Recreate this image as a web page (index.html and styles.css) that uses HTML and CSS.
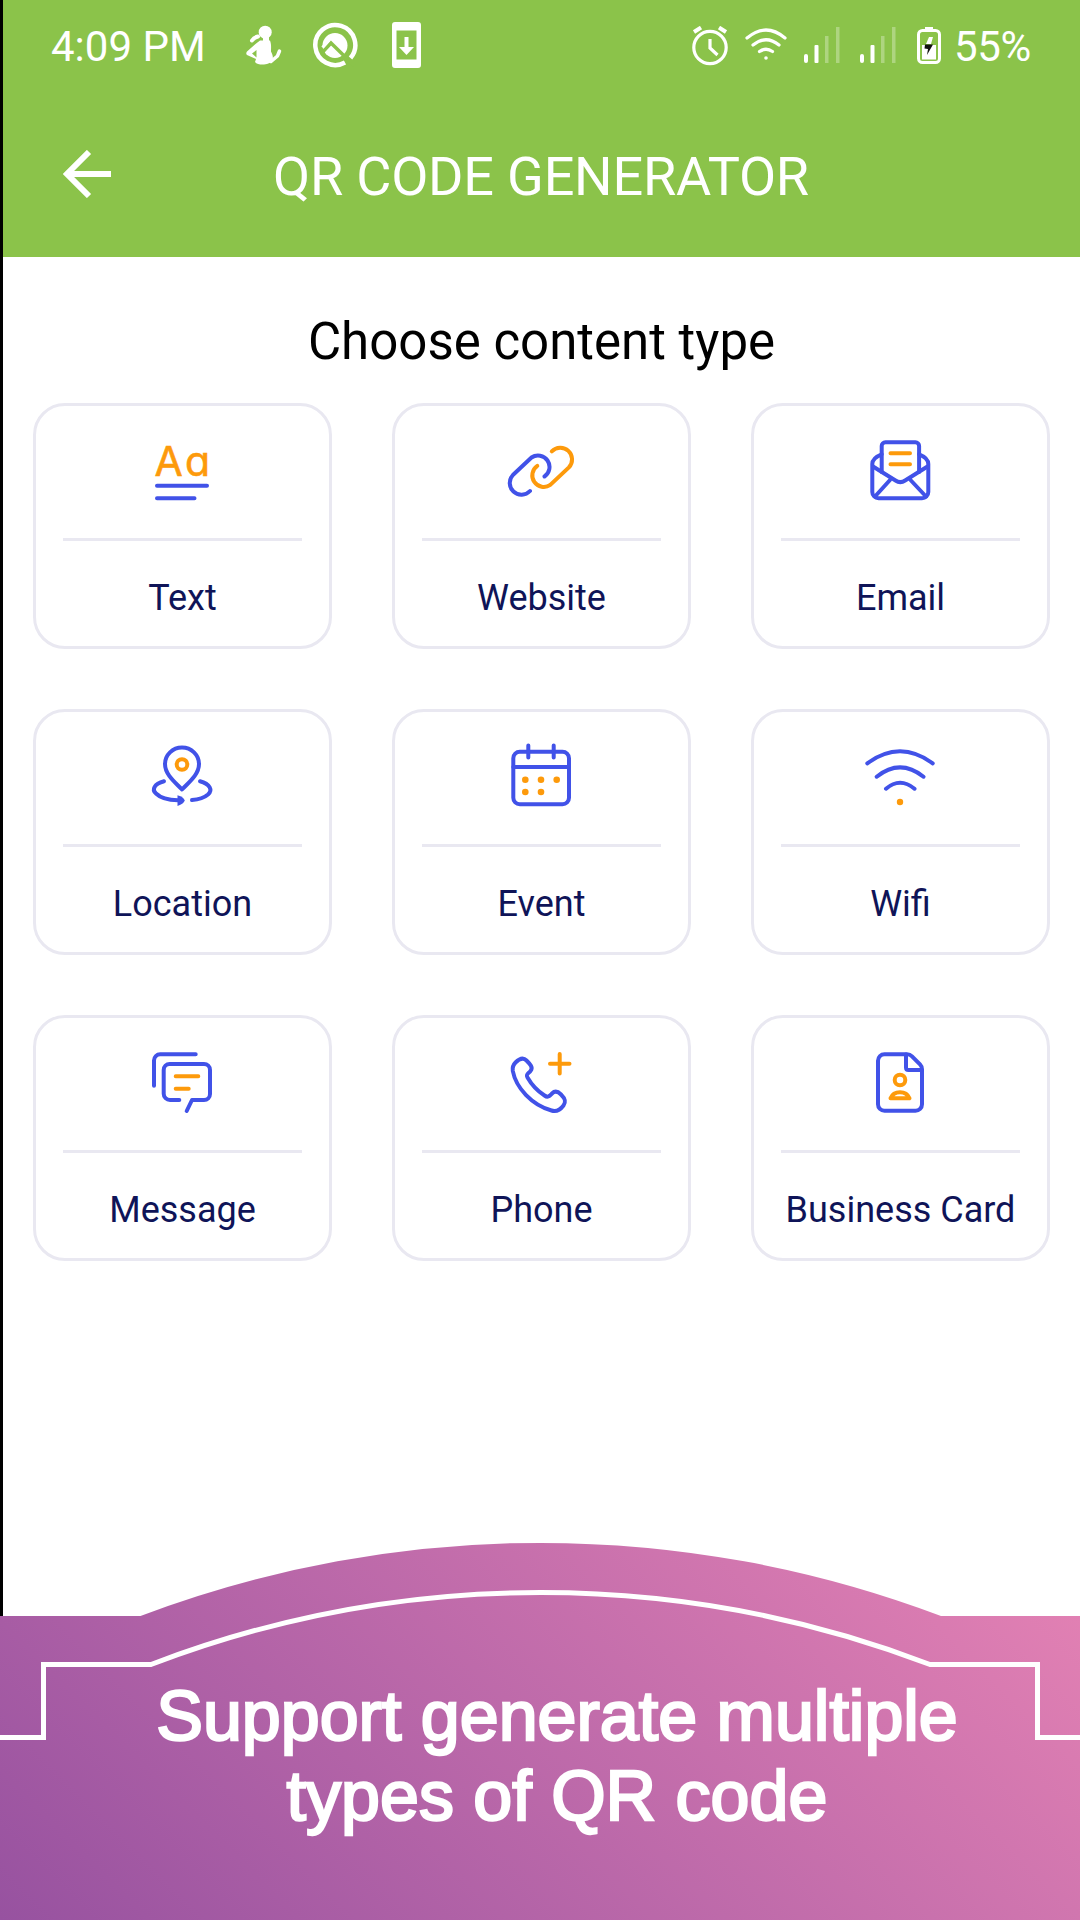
FILE: index.html
```html
<!DOCTYPE html>
<html lang="en">
<head>
  <meta charset="UTF-8">
  <meta name="viewport" content="width=device-width, initial-scale=1.0">
  <title>QR Code Generator</title>
  <link rel="stylesheet" href="styles.css">
</head>
<body>
  <div class="phone">
    <header class="header">
      <!-- Status bar -->
      <div class="status-bar">
        <span class="time">4:09 PM</span>
        <svg class="status-figure" width="36" height="40" viewBox="0 0 36 40">
          <circle cx="19.200" cy="7.200" r="6.500" fill="#fff"/>
          <path d="M6 15.500q2-3 6-4" fill="none" stroke="#fff" stroke-width="4" stroke-linecap="round"/>
          <path d="M25 36.500l6.500-5.500 2-5" fill="none" stroke="#fff" stroke-width="3.500" stroke-linecap="round"/>
          <path d="M17 10h6v8h-6z" fill="#fff"/>
          <path fill-rule="evenodd" fill="#fff" d="M14 15.500h10c1.500 4 1 7 1 11 2 4 2.500 6.500 1 9.500-2 4-14 5-17 1l1-3L1 30c-1-1-1-2 0-3.500L9.500 19zM10.500 25l-4.500 3.500 4.500 4z"/>
        </svg>
        <svg class="status-ring" width="46" height="46" viewBox="0 0 46 46">
          <circle cx="23" cy="23.500" r="12.500" fill="#fff"/>
          <path d="M6 35L19 21 42 43.500" fill="none" stroke="#8bc34a" stroke-width="3.500"/>
          <path d="M8 19v20h6l-1-8z" fill="#8bc34a" opacity=".6"/>
          <path d="M10.500 25.500l6.500-7.500" fill="none" stroke="#fff" stroke-width="3"/>
          <path d="M33 40.500A20 20 0 1 1 38.500 36" fill="none" stroke="#fff" stroke-width="4.500"/>
        </svg>
        <svg class="status-download" width="29" height="46" viewBox="0 0 29 46">
          <path fill-rule="evenodd" fill="#fff" d="M3 0h23a3 3 0 0 1 3 3v40a3 3 0 0 1-3 3H3a3 3 0 0 1-3-3V3a3 3 0 0 1 3-3zM4.500 8.500v29h20v-29z"/>
          <path fill="#fff" d="M12.500 15h4v10h5.500l-7.500 8-7.500-8h5.500z"/>
        </svg>
        <span class="spacer"></span>
        <svg class="status-alarm" width="36" height="40" viewBox="0 0 36 40" fill="none" stroke="#fff">
          <circle cx="18" cy="21.500" r="16.200" stroke-width="3.200"/>
          <path d="M18 13v9l7.500 7" stroke-width="3.200"/>
          <path d="M2 6l7-4.500M34 6l-7-4.500" stroke-width="4"/>
        </svg>
        <svg class="status-wifi" width="42" height="33" viewBox="0 0 42 33" fill="none" stroke="#fff" stroke-width="3.200" stroke-linecap="round">
          <path d="M2 10Q21-6 40 10M8 17q13-10.500 26 0M14.500 23.500q6.500-4.500 13 0"/>
          <circle cx="21" cy="30" r="1.800" fill="#fff" stroke="none"/>
        </svg>
        <svg class="status-signal" width="36" height="36" viewBox="0 0 36 36" fill="#fff">
          <rect x="0" y="27" width="4" height="9" rx="2"/>
          <rect x="10.500" y="18" width="4" height="18" rx="1"/>
          <rect x="21" y="9" width="3.500" height="27" opacity=".3"/>
          <rect x="32" y="0" width="3.500" height="36" opacity=".3"/>
        </svg>
        <svg class="status-signal" width="36" height="36" viewBox="0 0 36 36" fill="#fff">
          <rect x="0" y="27" width="4" height="9" rx="2"/>
          <rect x="10.500" y="18" width="4" height="18" rx="1"/>
          <rect x="21" y="9" width="3.500" height="27" opacity=".3"/>
          <rect x="32" y="0" width="3.500" height="36" opacity=".3"/>
        </svg>
        <svg class="status-battery" width="24" height="37" viewBox="0 0 24 37">
          <rect x="8" y="0" width="8" height="3" fill="#fff"/>
          <rect x="1.500" y="3.500" width="21" height="32" rx="4" fill="none" stroke="#fff" stroke-width="3"/>
          <path d="M5 18h14v14.500H5z" fill="#fff"/>
          <path d="M12 10h4l-2 7h-5z" fill="#fff"/>
          <path d="M8 17.500h8L10 28l1-6-3.500-.5z" fill="#111"/>
        </svg>
        <span class="battery-level">55%</span>
      </div>
      <!-- Title bar -->
      <div class="title-bar">
        <svg class="back" width="48" height="48" viewBox="0 0 48 48" fill="none" stroke="#fff" stroke-width="6">
          <path d="M26 2L4 24l22 22M4.500 24H48"/>
        </svg>
        <h1 class="title">QR CODE GENERATOR</h1>
      </div>
    </header>

    <main class="content">
      <h2 class="heading">Choose content type</h2>
      <div class="grid">
        <div class="card">
          <svg class="icon" viewBox="0 0 73 73">
            <text class="icon-text" x="8.600" y="39.500">A</text>
            <text class="icon-text" x="39" y="39.500">a</text>
            <path class="blue" d="M11 49.700h50M11 62.300h37.500"/>
          </svg>
          <div class="label">Text</div>
        </div>
        <div class="card">
          <svg class="icon" viewBox="0 0 73 73">
            <path class="blue" d="M25 55A11.500 11.500 0 1 1 7.900 39L26.500 21.500A11.500 11.500 0 1 1 39.500 40.500"/>
            <path class="orange" transform="rotate(180 35.900 35.200)" d="M25 55A11.500 11.500 0 1 1 7.900 39L26.500 21.500A11.500 11.500 0 1 1 39.500 40.500"/>
          </svg>
          <div class="label">Website</div>
        </div>
        <div class="card">
          <svg class="icon" viewBox="0 0 73 73">
            <path class="blue" d="M17.700 36V10a3.700 3.700 0 0 1 3.700-3.700h30a3.700 3.700 0 0 1 3.700 3.700v26"/>
            <path class="blue" d="M17.700 18.300Q8.300 22 8.300 28v28a6.300 6.300 0 0 0 6.300 6.300h43.400a6.300 6.300 0 0 0 6.300-6.300V28q0-6-9.200-9.700"/>
            <path class="blue" d="M9 30.500L31.500 44.500q4.800 3.200 9.600 0L63.500 30.500M26 44L11 60.500M46.500 44l15.500 16.500"/>
            <path class="orange" d="M26.500 17.300h19.500M26.500 28.300h19.500"/>
          </svg>
          <div class="label">Email</div>
        </div>
        <div class="card">
          <svg class="icon" viewBox="0 0 73 73">
            <path class="blue" d="M36 47.500C30 41 19 33 19 22a17 16.500 0 0 1 34 0C53 33 42 41 36 47.500z"/>
            <circle class="orange" cx="36" cy="22.500" r="5.300"/>
            <path class="blue" d="M18 39.300C8 42 5.500 47.500 10 51.500 14 55.500 22 58 32 58.300M54 39.300C64 42 67 48 62 52.500 58.500 55.500 53 57.500 46 58"/>
            <path class="blue-fill" d="M31.500 53.200q6.500 2 7.200 5.200-.7 3.200-7.200 5.600z"/>
          </svg>
          <div class="label">Location</div>
        </div>
        <div class="card">
          <svg class="icon" viewBox="0 0 73 73">
            <rect class="blue" x="8.300" y="9.700" width="55.700" height="52.600" rx="6.500"/>
            <path class="blue" d="M8.300 25H64M23.300 3.500v12M48.700 3.500v12"/>
            <g class="orange-fill">
              <circle cx="20.300" cy="37.700" r="3.300"/>
              <circle cx="36" cy="37.700" r="3.300"/>
              <circle cx="51.700" cy="37.700" r="3.300"/>
              <circle cx="20.300" cy="50" r="3.300"/>
              <circle cx="36" cy="50" r="3.300"/>
            </g>
          </svg>
          <div class="label">Event</div>
        </div>
        <div class="card">
          <svg class="icon" viewBox="0 0 73 73">
            <path class="blue" d="M3.300 21.300Q36-2.700 68.700 21.300M12.700 34.700Q36 16 59.500 34.700M22 46.700Q36 34.700 50.500 46.700"/>
            <circle class="orange-fill" cx="36" cy="60" r="3.200"/>
          </svg>
          <div class="label">Wifi</div>
        </div>
        <div class="card">
          <svg class="icon" viewBox="0 0 73 73">
            <path class="blue" d="M8 37.700V12.500a6.200 6.200 0 0 1 6.200-6.200h35.500"/>
            <path class="blue" d="M33.300 52H24a6.300 6.300 0 0 1-6.300-6.300V22A6 6 0 0 1 23.700 16H58a6 6 0 0 1 6 6v24a6 6 0 0 1-6 6H46l-5.300 11"/>
            <path class="orange" d="M29.700 28.300h22.600M29.700 40.700h13"/>
          </svg>
          <div class="label">Message</div>
        </div>
        <div class="card">
          <svg class="icon" viewBox="0 0 73 73">
            <path class="blue" d="M10.500 14.500C13 12 17.500 8.500 21.500 12.500 25 16 28.500 19.500 25.500 23 23.500 25.500 20.500 26 22.500 29.500 26.500 36.500 32.500 43 39.500 47.500 43 50 44.500 48 47 45.500 50 42.500 53 43.500 56 46.500 60 50.500 61.500 53.500 58.500 57.500 55.500 61.500 51 64 46.500 62.500 27 57 11 40 7.800 23 7.300 19.500 8 17 10.500 14.500z"/>
            <path class="orange" d="M54.700 6v19.500M45 15.700h19.500"/>
          </svg>
          <div class="label">Phone</div>
        </div>
        <div class="card">
          <svg class="icon" viewBox="0 0 73 73">
            <path class="blue" d="M20.500 6.300H43q3 0 5 2l8 8q2 2 2 5V56.200a6.500 6.500 0 0 1-6.500 6.500h-31A6.500 6.500 0 0 1 14 56.200V12.800A6.500 6.500 0 0 1 20.500 6.300z"/>
            <path class="blue" d="M42 6.500V19.500Q42 22 44.500 22H57.500"/>
            <circle class="orange" cx="36" cy="32" r="5.300"/>
            <path class="orange" d="M26.500 50.300q2.500-6 9.500-6t9.500 6z"/>
          </svg>
          <div class="label">Business Card</div>
        </div>
      </div>
    </main>
  </div>

  <!-- Promo banner -->
  <div class="banner">
    <svg class="banner-shape" width="1080" height="378" viewBox="0 0 1080 378">
      <defs>
        <linearGradient id="bannerFill" gradientUnits="userSpaceOnUse" x1="0" y1="378" x2="692" y2="-314">
          <stop offset="0" stop-color="#9752a0"/>
          <stop offset="1" stop-color="#e180b3"/>
        </linearGradient>
      </defs>
      <path fill="url(#bannerFill)" d="M0 74H140.500A1132 1132 0 0 1 941 74H1080V378H0z"/>
      <path fill="none" stroke="#fff" stroke-width="5" d="M0 195.500H43.500V122.500H151A1090 1090 0 0 1 930 122.500H1037.500V195.500H1080"/>
    </svg>
    <p class="banner-text">Support generate multiple<br>types of QR code</p>
  </div>
</body>
</html>
```
FILE: styles.css
```css
body {
  margin: 0;
  width: 1080px;
  height: 1920px;
  overflow: hidden;
  background: #fff;
  font-family: Roboto, sans-serif;
}

svg {
  display: block;
  flex-shrink: 0;
}

.phone {
  box-sizing: border-box;
  height: 1616px;
  border-left: 3px solid #000;
}

.header {
  height: 257px;
  background: #8bc34a;
  color: #fff;
}

/* Status bar */
.status-bar {
  display: flex;
  align-items: center;
  box-sizing: border-box;
  height: 90px;
  padding: 0 49px 0 48px;
  font-size: 42px;
  line-height: 90px;
}

.time {
  width: 195px;
  padding-top: 3px;
  white-space: nowrap;
}

.battery-level {
  width: 77px;
  padding-top: 3px;
  letter-spacing: -0.3px;
  white-space: nowrap;
}

.status-ring {
  margin-left: 30px;
}

.status-download {
  margin-left: 34px;
}

.spacer {
  flex: 1;
}

.status-alarm {
  margin-top: 2px;
}

.status-wifi {
  margin: -2px 0 0 17px;
}

.status-signal {
  margin-left: 17px;
}

.status-signal + .status-signal {
  margin-left: 20px;
}

.status-battery {
  margin: 0 13px 0 21px;
}

/* Title bar */
.title-bar {
  display: flex;
  align-items: center;
  height: 167px;
  padding-left: 60px;
}

.title {
  margin: 5px 0 0 162px;
  font-size: 54px;
  font-weight: 400;
  letter-spacing: -0.2px;
  white-space: nowrap;
}

/* Content types */
.heading {
  margin: 0;
  padding-top: 47px;
  height: 99px;
  font-size: 51px;
  font-weight: 400;
  line-height: 76px;
  text-align: center;
  color: #000;
}

.content {
  padding: 0 30px;
}

.grid {
  display: grid;
  grid-template-columns: repeat(3, 299px);
  grid-auto-rows: 246px;
  gap: 60px;
}

.card {
  display: flex;
  flex-direction: column;
  align-items: center;
  box-sizing: border-box;
  border: 3px solid #e9e8f1;
  border-radius: 32px;
  padding: 30px 27px 0;
}

.icon {
  width: 73px;
  height: 73px;
  overflow: visible;
}

.label {
  align-self: stretch;
  margin-top: 29px;
  border-top: 3px solid #e9e8f1;
  padding-top: 32px;
  font-size: 36px;
  line-height: 50px;
  text-align: center;
  white-space: nowrap;
  color: #0f1458;
}

.blue,
.orange {
  fill: none;
  stroke: #4152e8;
  stroke-width: 4;
  stroke-linecap: round;
  stroke-linejoin: round;
}

.orange {
  stroke: #fd9a0b;
}

.blue-fill {
  fill: #4152e8;
}

.orange-fill {
  fill: #fd9a0b;
}

.icon-text {
  font-family: Inter, sans-serif;
  font-size: 41px;
  font-feature-settings: "cv11";
  fill: #fd9a0b;
  stroke: #fd9a0b;
  stroke-width: 0.6;
}

/* Banner */
.banner {
  position: relative;
  height: 378px;
  margin-top: -74px;
}

.banner-shape {
  position: absolute;
  top: 0;
  left: 0;
}

.banner-text {
  position: relative;
  margin: 0;
  padding: 134px 0 0 34px;
  font-family: "Liberation Sans", Arial, sans-serif;
  font-size: 70px;
  line-height: 80px;
  text-align: center;
  color: #fff;
  -webkit-text-stroke: 2.4px #fff;
}
```
